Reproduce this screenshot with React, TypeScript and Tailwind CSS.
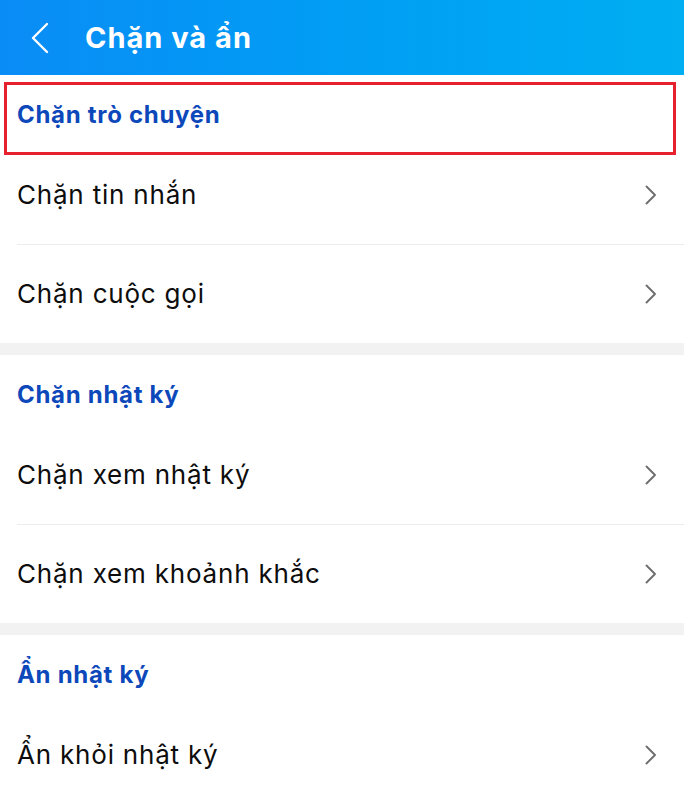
import React from "react";

const font = { fontFamily: "Inter, 'Noto Sans', 'Liberation Sans', sans-serif" };

function Chevron() {
  return (
    <svg width="14" height="20" viewBox="0 0 14 20" fill="none" className="shrink-0">
      <path d="M2.5 1.5 L11 10 L2.5 18.5" stroke="#6e6e6e" strokeWidth="1.9" strokeLinecap="round" strokeLinejoin="round" />
    </svg>
  );
}

function Item({ label, divider }: { label: string; divider?: boolean }) {
  return (
    <div className="relative">
      <div className="flex h-[98px] items-center justify-between pl-[17px] pr-[26px]">
        <span className="text-[26px] leading-[30px] tracking-[0.8px] text-[#0d0d0d]">{label}</span>
        <Chevron />
      </div>
      {divider && <div className="ml-[17px] h-px bg-[#ececec]" />}
    </div>
  );
}

function Section({ title, items, highlight }: { title: string; items: string[]; highlight?: boolean }) {
  return (
    <div className="bg-white">
      <div className="relative h-[71px] pl-[17px] pt-[25px]">
        <span className="text-[24px] font-bold leading-[29px] tracking-[0.7px] text-[#0c48ba]">{title}</span>
        {highlight && (
          <div className="pointer-events-none absolute left-[4px] top-[7px] h-[73px] w-[672px] border-[3px] border-[#e6202c]" />
        )}
      </div>
      {items.map((it, i) => (
        <Item key={it} label={it} divider={i < items.length - 1} />
      ))}
    </div>
  );
}

export default function App() {
  return (
    <div style={font} className="w-[684px] h-[800px] overflow-hidden bg-[#f2f2f2]">
      <div className="flex h-[75px] items-center bg-gradient-to-r from-[#0a8cf6] to-[#00aef2]">
        <svg width="20" height="32" viewBox="0 0 20 32" fill="none" className="ml-[30px]">
          <path d="M17 2 L3 16 L17 30" stroke="white" strokeWidth="2.4" strokeLinecap="round" strokeLinejoin="round" />
        </svg>
        <span className="ml-[35px] text-[29px] font-bold leading-[34px] tracking-[1px] text-white">Chặn và ẩn</span>
      </div>
      <Section title="Chặn trò chuyện" items={["Chặn tin nhắn", "Chặn cuộc gọi"]} highlight />
      <div className="h-[12px]" />
      <Section title="Chặn nhật ký" items={["Chặn xem nhật ký", "Chặn xem khoảnh khắc"]} />
      <div className="h-[12px]" />
      <Section title="Ẩn nhật ký" items={["Ẩn khỏi nhật ký"]} />
    </div>
  );
}
